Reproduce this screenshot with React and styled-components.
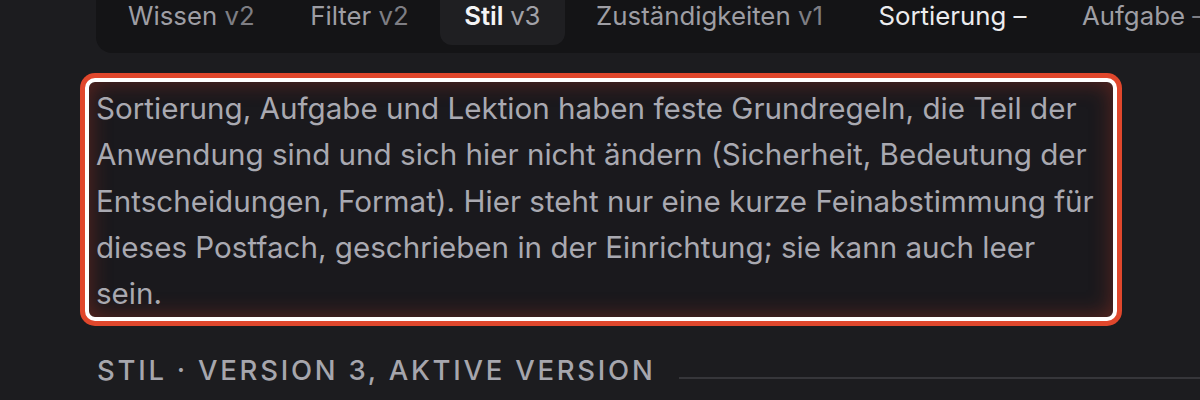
import React from "react";
import styled, { createGlobalStyle } from "styled-components";

const Global = createGlobalStyle`
  html, body { margin: 0; padding: 0; background: #1c1c1f; overflow: hidden; }
  body { font-family: Inter, "Noto Sans", sans-serif; width: 1200px; height: 400px; }
`;

const Page = styled.div`
  display: flex;
  flex-direction: column;
  padding-left: 85px;
  width: 1200px;
  box-sizing: border-box;
`;

const TabBar = styled.nav`
  display: flex;
  gap: 7.5px;
  padding: 8px;
  margin: -21px 0 0 11px;
  background: #141416;
  border-radius: 16px;
  width: max-content;
  flex: none;
`;

const Tab = styled.div`
  height: 58px;
  line-height: 58px;
  padding: 0 24px;
  border-radius: 12px;
  font-size: 25.8px;
  white-space: nowrap;
  background: ${(p) => (p.$active ? "#1f1f22" : "transparent")};
  color: ${(p) => (p.$active ? "#f4f4f5" : p.$highlight ? "#ececee" : "#9e9ea4")};
  font-weight: ${(p) => (p.$active ? 600 : 400)};
`;

const Version = styled.span`
  font-weight: 400;
  color: ${(p) => (p.$light ? "#ececee" : p.$active ? "#a2a2a8" : "#7e7e84")};
`;

const Editor = styled.textarea`
  display: block;
  margin-top: 25px;
  width: 1032px;
  height: 242.5px;
  box-sizing: border-box;
  padding: 3px 7px 0 7px;
  border: 4px solid #ffffff;
  border-radius: 10px;
  background: #1a191d;
  box-shadow: 0 0 0 5px #e0472c, inset 0 0 22px rgba(190, 55, 35, 0.42);
  color: #a9a9b1;
  font-family: Inter, "Noto Sans", sans-serif;
  font-size: 29.6px;
  line-height: 46.3px;
  resize: none;
  overflow: hidden;
  outline: none;
`;

const SectionRow = styled.div`
  display: flex;
  align-items: flex-end;
  gap: 24px;
  margin-top: 29.5px;
  padding-left: 12px;
`;

const SectionTitle = styled.h2`
  margin: 0;
  font-size: 27.5px;
  line-height: 40px;
  font-weight: 500;
  letter-spacing: 2.75px;
  text-transform: uppercase;
  color: #a6a6ad;
  white-space: nowrap;
`;

const Rule = styled.div`
  flex: 1;
  height: 2px;
  background: #36363a;
  margin-bottom: 11px;
`;

const tabs = [
  { name: "Wissen", v: "v2" },
  { name: "Filter", v: "v2" },
  { name: "Stil", v: "v3", active: true },
  { name: "Zuständigkeiten", v: "v1" },
  { name: "Sortierung", v: "–", highlight: true },
  { name: "Aufgabe", v: "–" },
  { name: "Lektion", v: "–" },
];

const text =
  "Sortierung, Aufgabe und Lektion haben feste Grundregeln, die Teil der Anwendung sind und sich hier nicht ändern (Sicherheit, Bedeutung der Entscheidungen, Format). Hier steht nur eine kurze Feinabstimmung für dieses Postfach, geschrieben in der Einrichtung; sie kann auch leer sein.";

export default function App() {
  return (
    <>
      <Global />
      <Page>
        <TabBar>
          {tabs.map((t) => (
            <Tab key={t.name} $active={t.active} $highlight={t.highlight}>
              {t.name}{" "}
              <Version $active={t.active} $light={t.highlight}>
                {t.v}
              </Version>
            </Tab>
          ))}
        </TabBar>
        <Editor readOnly defaultValue={text} />
        <SectionRow>
          <SectionTitle>Stil · Version 3, aktive Version</SectionTitle>
          <Rule />
        </SectionRow>
      </Page>
    </>
  );
}
